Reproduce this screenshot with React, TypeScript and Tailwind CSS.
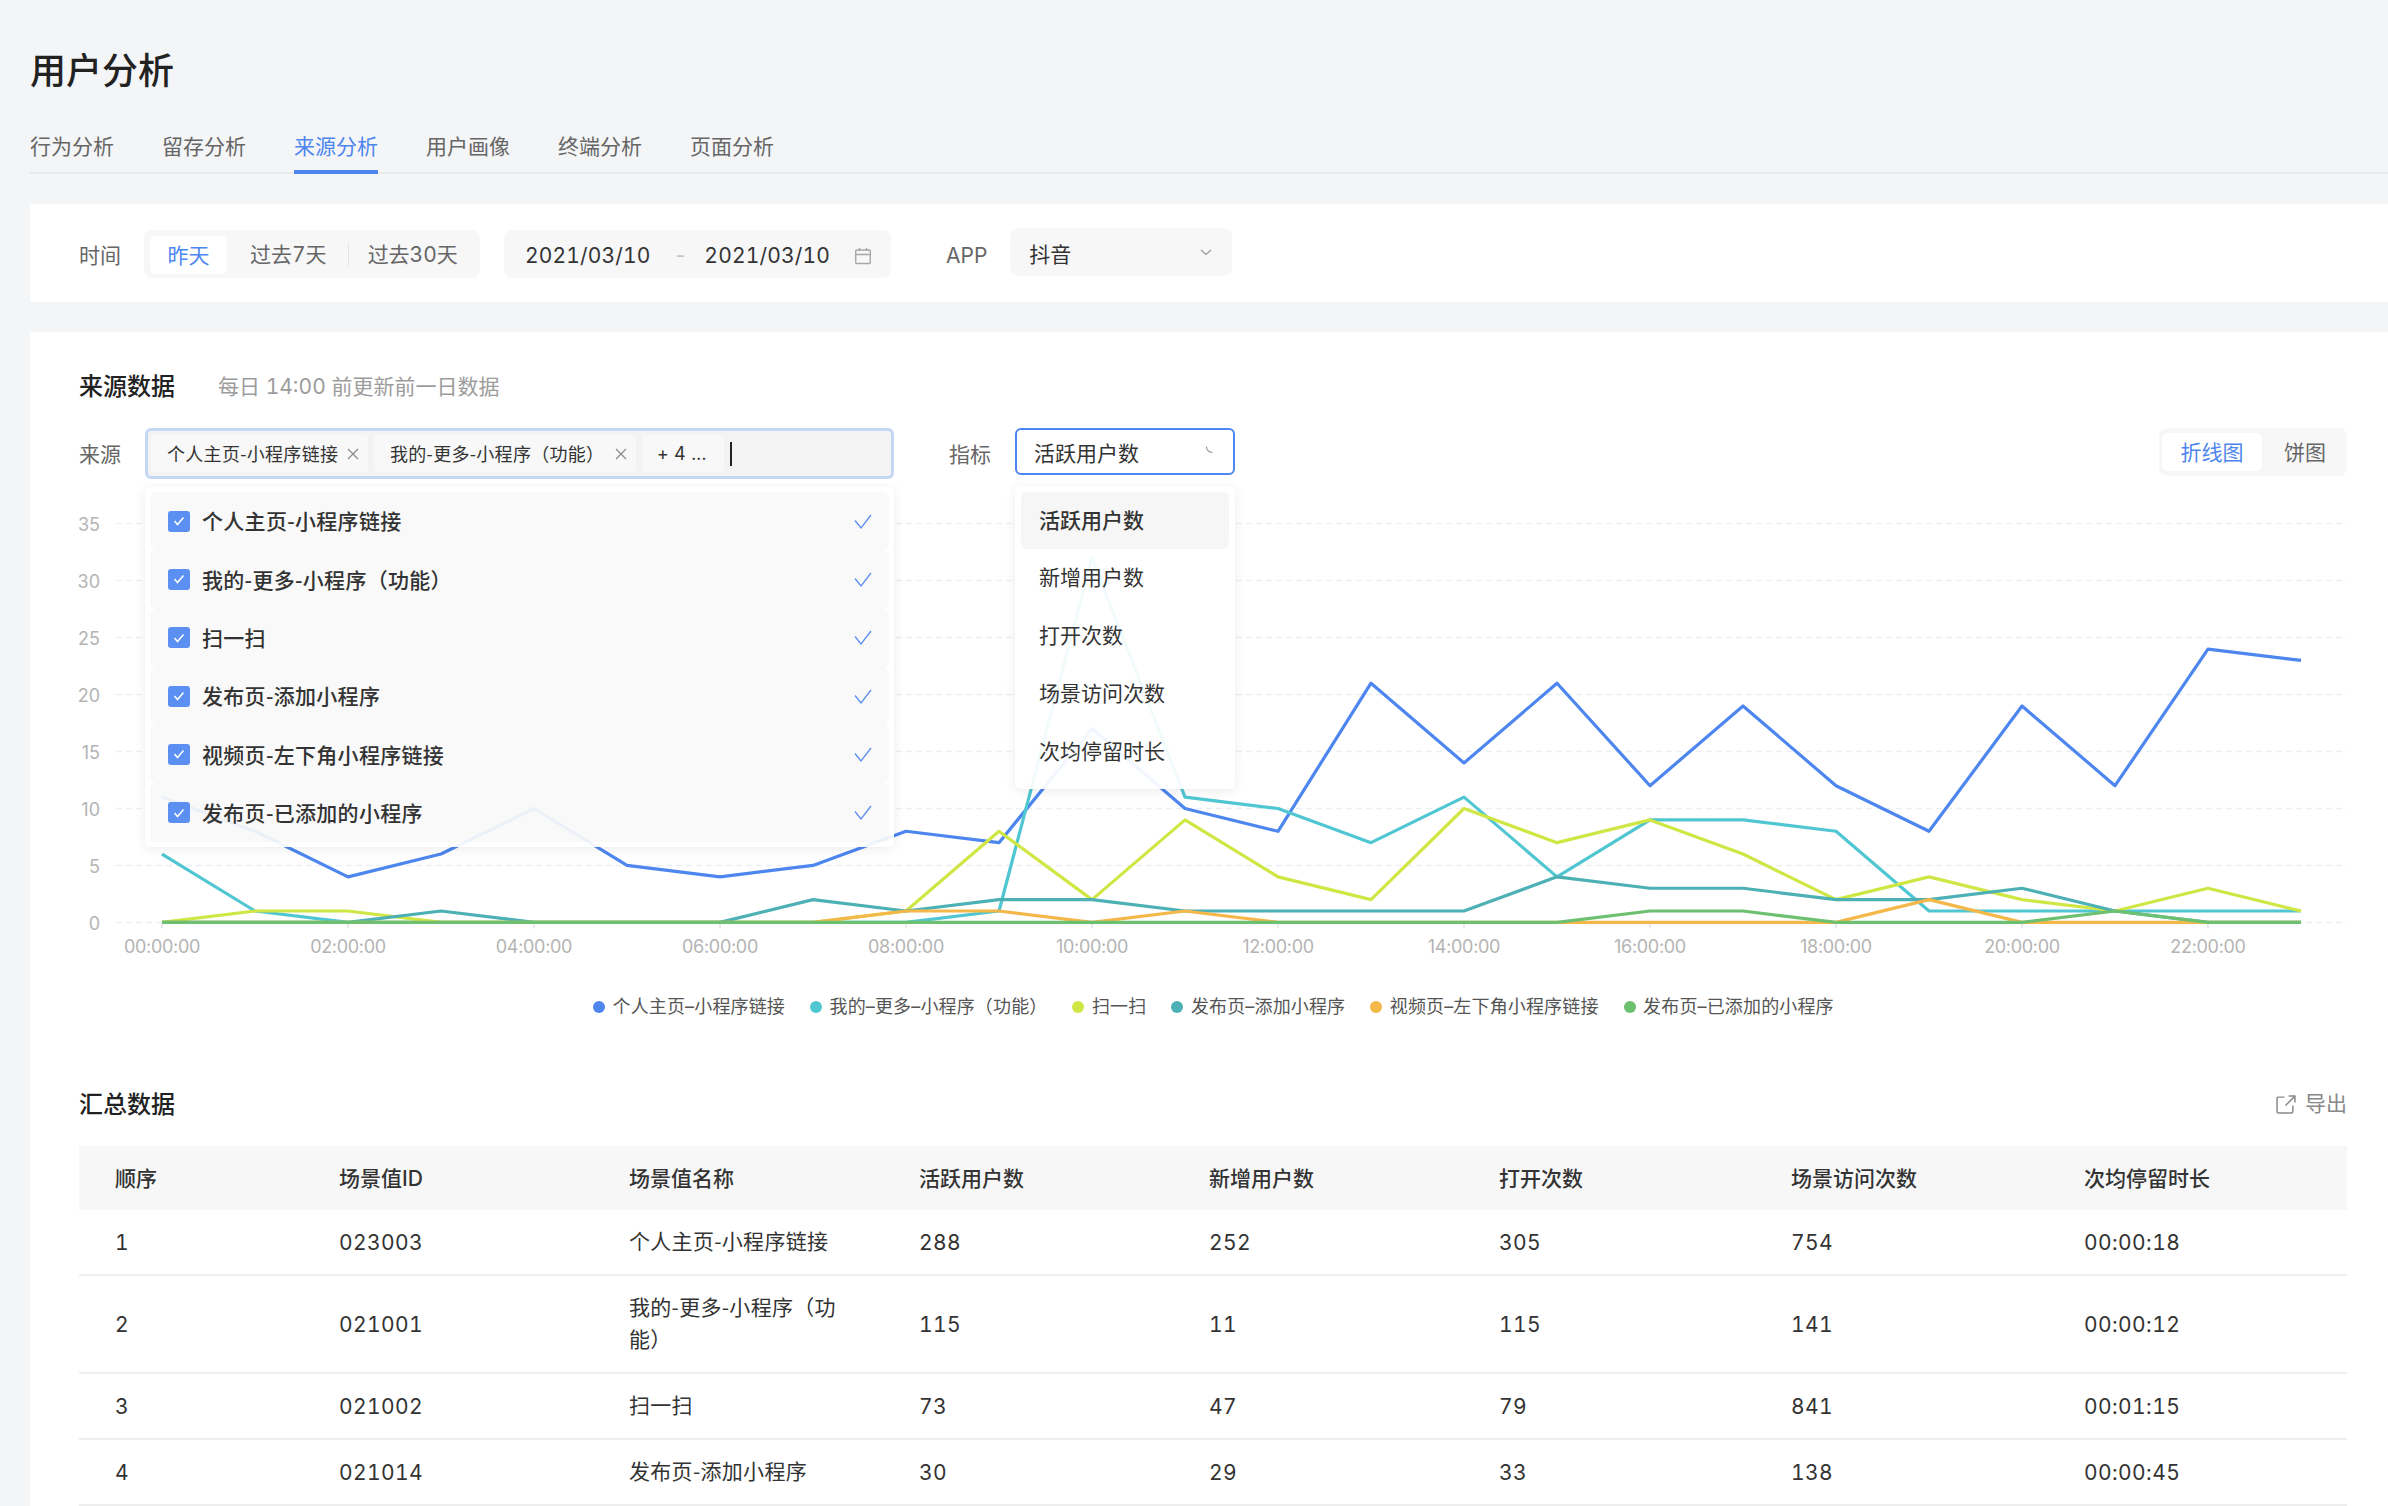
import React from "react";

const series: { color: string; values: number[] }[] = [
  { color: "#4d86ef", values: [11, 8, 4, 6, 10, 5, 4, 5, 8, 7, 17, 10, 8, 21, 14, 21, 12, 19, 12, 8, 19, 12, 24, 23] },
  { color: "#4fc6d1", values: [6, 1, 0, 0, 0, 0, 0, 0, 0, 1, 32, 11, 10, 7, 11, 4, 9, 9, 8, 1, 1, 1, 1, 1] },
  { color: "#cfe644", values: [0, 1, 1, 0, 0, 0, 0, 0, 1, 8, 2, 9, 4, 2, 10, 7, 9, 6, 2, 4, 2, 1, 3, 1] },
  { color: "#4cb0b5", values: [0, 0, 0, 1, 0, 0, 0, 2, 1, 2, 2, 1, 1, 1, 1, 4, 3, 3, 2, 2, 3, 1, 0, 0] },
  { color: "#f4b74a", values: [0, 0, 0, 0, 0, 0, 0, 0, 1, 1, 0, 1, 0, 0, 0, 0, 0, 0, 0, 2, 0, 0, 0, 0] },
  { color: "#6cc070", values: [0, 0, 0, 0, 0, 0, 0, 0, 0, 0, 0, 0, 0, 0, 0, 0, 1, 1, 0, 0, 0, 1, 0, 0] },
];

const X0 = 93;
const XS = 93;
const Y0 = 432.4;
const YS = 11.39;

const sources = [
  "个人主页-小程序链接",
  "我的-更多-小程序（功能）",
  "扫一扫",
  "发布页-添加小程序",
  "视频页-左下角小程序链接",
  "发布页-已添加的小程序",
];
const metrics = ["活跃用户数", "新增用户数", "打开次数", "场景访问次数", "次均停留时长"];
const legend = [
  { color: "bg-[#4d86ef]", label: "个人主页–小程序链接" },
  { color: "bg-[#4fc6d1]", label: "我的–更多–小程序（功能）" },
  { color: "bg-[#cfe644]", label: "扫一扫" },
  { color: "bg-[#4cb0b5]", label: "发布页–添加小程序" },
  { color: "bg-[#f4b74a]", label: "视频页–左下角小程序链接" },
  { color: "bg-[#6cc070]", label: "发布页–已添加的小程序" },
];
const headers = ["顺序", "场景值ID", "场景值名称", "活跃用户数", "新增用户数", "打开次数", "场景访问次数", "次均停留时长"];
const rows = [
  ["1", "023003", "个人主页-小程序链接", "288", "252", "305", "754", "00:00:18"],
  ["2", "021001", "我的-更多-小程序（功能）", "115", "11", "115", "141", "00:00:12"],
  ["3", "021002", "扫一扫", "73", "47", "79", "841", "00:01:15"],
  ["4", "021014", "发布页-添加小程序", "30", "29", "33", "138", "00:00:45"],
];
const tabs = ["行为分析", "留存分析", "来源分析", "用户画像", "终端分析", "页面分析"];

function Cross() {
  return (
    <svg width="12" height="12" viewBox="0 0 12 12" fill="none" stroke="#8a8a8a" strokeWidth="1.2">
      <path d="M1 1l10 10M11 1L1 11" />
    </svg>
  );
}

function Chart() {
  return (
    <svg width="2278" height="470" viewBox="0 0 2278 470" className="-ml-[10px] mt-[11px] block [font-variant-numeric:normal]">
      {[0, 1, 2, 3, 4, 5, 6, 7].map((k) => (
        <g key={k}>
          <line x1="47" x2="2278" y1={Y0 - 57 * k} y2={Y0 - 57 * k} stroke="#eceef1" strokeWidth="1.5" strokeDasharray="6 4" />
          <text x="31" y={Y0 - 57 * k + 7.5} textAnchor="end" fontSize="18" fill="#b4b4b4">
            {k * 5}
          </text>
        </g>
      ))}
      {Array.from({ length: 12 }, (_, i) => i * 2).map((h) => (
        <g key={h}>
          <line x1={X0 + XS * h} x2={X0 + XS * h} y1={Y0} y2={Y0 + 6} stroke="#e3e3e3" strokeWidth="1.5" />
          <text x={X0 + XS * h} y="463" textAnchor="middle" fontSize="18" letterSpacing="-0.3" fill="#b4b4b4">
            {`${String(h).padStart(2, "0")}:00:00`}
          </text>
        </g>
      ))}
      {series.map((s) => (
        <polyline
          key={s.color}
          fill="none"
          stroke={s.color}
          strokeWidth="3.2"
          strokeLinejoin="round"
          points={s.values.map((v, i) => `${X0 + XS * i},${Y0 - YS * v}`).join(" ")}
        />
      ))}
    </svg>
  );
}

export default function App() {
  return (
    <div className="h-[1506px] overflow-hidden bg-[#f4f5f7] pl-[30px] text-[21px] text-[#333] [font-variant-numeric:tabular-nums] font-['Inter','Noto_Sans_CJK_SC',sans-serif]">
      <h1 className="pt-[46px] text-[36px] leading-[50px] font-medium text-[#222]">用户分析</h1>
      <div className="mt-[35px] flex gap-[48px] border-b-[2px] border-[#e8e9eb]">
        {tabs.map((t, i) => (
          <div
            key={t}
            className={
              i === 2
                ? "-mb-[2px] h-[43px] border-b-[4px] border-[#4d86ef] leading-[31px] text-[#4d86ef]"
                : "h-[41px] leading-[31px] text-[#666]"
            }
          >
            {t}
          </div>
        ))}
      </div>

      <div className="mt-[30px] flex h-[98px] items-center bg-white pl-[49px] pt-[2px]">
        <span className="pt-[3px] text-[#666]">时间</span>
        <div className="ml-[23px] flex h-[48px] w-[336px] items-center rounded-lg bg-[#f7f7f8] pl-[6px] pt-[2px]">
          <div className="flex h-[38px] w-[77px] items-center justify-center rounded-md bg-white pt-[2px] text-[#4d86ef]">昨天</div>
          <div className="pl-[23px] pr-[21px] text-[#666]">过去7天</div>
          <div className="h-[24px] w-[1px] bg-[#e6e6e6]"></div>
          <div className="pl-[19px] text-[#666]">过去30天</div>
        </div>
        <div className="ml-[24px] flex h-[48px] w-[387px] items-center rounded-lg bg-[#f7f7f8] pl-[21px] pt-[3px] tracking-[0.15px] text-[#333]">
          <span>2021/03/10</span>
          <span className="ml-[23px] text-[#c4c4c4]">-</span>
          <span className="ml-[17px]">2021/03/10</span>
          <svg className="ml-[24px]" width="18" height="18" viewBox="0 0 18 18" fill="none" stroke="#a8a8a8" strokeWidth="1.4">
            <rect x="1.7" y="3" width="14.6" height="13.5" rx="1" />
            <path d="M1.7 7.5h14.6M5.5 1v3M12.5 1v3" />
          </svg>
        </div>
        <span className="ml-[55px] pt-[3px] text-[#666]">APP</span>
        <div className="relative ml-[23px] mb-[4px] flex h-[48px] w-[222px] items-center rounded-lg bg-[#f7f7f8] pl-[19px] pt-[5px]">
          <span>抖音</span>
          <svg className="absolute right-[20px] top-[21px]" width="12" height="7" viewBox="0 0 12 7" fill="none" stroke="#999" strokeWidth="1.2">
            <path d="M1 1l5 4.5L11 1" />
          </svg>
        </div>
      </div>

      <div className="mt-[30px] h-[1174px] bg-white pl-[49px] pr-[41px]">
        <div className="flex items-center pt-[38px] leading-[34px]">
          <span className="text-[24px] font-medium text-[#222]">来源数据</span>
          <span className="ml-[43px] text-[#9c9c9c]">每日 14:00 前更新前一日数据</span>
        </div>

        <div className="mt-[24px] flex h-[51px] items-start">
          <span className="leading-[54px] text-[#666]">来源</span>
          <div className="relative z-10 ml-[24px] w-[749px]">
            <div className="flex h-[51px] items-center gap-[6px] rounded-md border-[3px] border-[#c6d7f6] bg-[#f3f3f4] pl-[3px] text-[18px] tracking-[0.3px] font-['Noto_Sans_CJK_SC',sans-serif]">
              <div className="flex h-[37px] w-[217px] items-center justify-between rounded bg-[#f8f8f8] pl-[16px] pr-[9px] whitespace-nowrap">
                <span>个人主页-小程序链接</span>
                <Cross />
              </div>
              <div className="flex h-[37px] w-[262px] items-center justify-between rounded bg-[#f8f8f8] pl-[16px] pr-[9px] whitespace-nowrap">
                <span>我的-更多-小程序（功能）</span>
                <Cross />
              </div>
              <div className="flex h-[37px] w-[82px] items-center rounded bg-[#f8f8f8] pl-[15px] whitespace-nowrap font-['Inter',sans-serif]">+ 4 ...</div>
              <div className="h-[24px] w-[2px] bg-[#222]"></div>
            </div>
            <div className="absolute left-0 top-[59px] h-[360px] w-full rounded-md bg-white/[0.93] p-[5px] shadow-[0_2px_12px_rgba(0,0,0,0.08)]">
              {sources.map((s) => (
                <div key={s} className="flex h-[58.3px] items-center rounded-md bg-black/[0.025] pl-[18px] pr-[17px] font-medium tracking-[0.3px] font-['Noto_Sans_CJK_SC',sans-serif]">
                  <div className="flex h-[21px] w-[22px] items-center justify-center rounded-[3px] bg-[#5b8ff2]">
                    <svg width="12" height="10" viewBox="0 0 12 10" fill="none" stroke="#fff" strokeWidth="1.5">
                      <path d="M1.5 5l3 3.5L10.5 1.5" />
                    </svg>
                  </div>
                  <span className="ml-[12px]">{s}</span>
                  <svg className="ml-auto" width="18" height="15" viewBox="0 0 18 15" fill="none" stroke="#5d90ee" strokeWidth="1.3">
                    <path d="M1 6.5l6 7.5L17 1" />
                  </svg>
                </div>
              ))}
            </div>
          </div>
          <span className="ml-[55px] leading-[54px] text-[#666]">指标</span>
          <div className="relative z-10 ml-[24px] w-[220px]">
            <div className="relative flex h-[47px] items-center rounded-md border-[2px] border-[#4d86ef] bg-white pl-[17px] pt-[4px]">
              活跃用户数
              <svg className="absolute right-[18px] top-[15px]" width="10" height="10" viewBox="0 0 10 10" fill="none" stroke="#999" strokeWidth="1.2">
                <path d="M1.5 1.5c0 3 2 5.500 6 6" />
              </svg>
            </div>
            <div className="absolute left-0 top-[58px] h-[303px] w-full rounded-md bg-white/[0.93] p-[6px] shadow-[0_2px_12px_rgba(0,0,0,0.08)]">
              {metrics.map((m, i) => (
                <div
                  key={m}
                  className={
                    i === 0
                      ? "flex h-[57px] items-center rounded-md bg-black/[0.035] pl-[18px] font-medium"
                      : "flex h-[58px] items-center pl-[18px]"
                  }
                >
                  {m}
                </div>
              ))}
            </div>
          </div>
          <div className="ml-auto flex h-[48px] w-[188px] items-center rounded-lg bg-[#f7f7f8] pl-[3px]">
            <div className="flex h-[38px] w-[100px] items-center justify-center rounded-md bg-white pt-[2px] text-[#4d86ef]">折线图</div>
            <div className="pl-[22px] pt-[2px] text-[#666]">饼图</div>
          </div>
        </div>

        <Chart />

        <div className="mt-[34px] flex gap-[25px] pl-[514px] text-[18px] leading-[26px] tracking-[0.15px] text-[#555]">
          {legend.map((l) => (
            <div key={l.label} className="flex items-center gap-[7.5px] whitespace-nowrap">
              <span className={`h-[12px] w-[12px] rounded-full ${l.color}`}></span>
              <span>{l.label}</span>
            </div>
          ))}
        </div>

        <div className="mt-[67px] flex h-[34px] items-center pt-[2px]">
          <span className="text-[24px] font-medium text-[#222]">汇总数据</span>
          <div className="ml-auto mb-[2px] flex items-center gap-[9px] text-[#888]">
            <svg width="20" height="19" viewBox="0 0 19 18" fill="none" stroke="#888" strokeWidth="1.4">
              <path d="M8 2H2a1 1 0 0 0-1 1v13a1 1 0 0 0 1 1h13a1 1 0 0 0 1-1v-6M9 10l8.500-8.500M12 1h6v6" />
            </svg>
            <span>导出</span>
          </div>
        </div>

        <table className="mt-[25px] w-[2268px] table-fixed border-collapse">
          <colgroup>
            <col className="w-[224px]" />
            <col className="w-[290px]" />
            <col className="w-[290px]" />
            <col className="w-[290px]" />
            <col className="w-[290px]" />
            <col className="w-[292px]" />
            <col className="w-[293px]" />
            <col />
          </colgroup>
          <thead>
            <tr className="h-[64px] bg-[#f7f7f8]">
              {headers.map((h) => (
                <th key={h} className="pl-[36px] pt-[1px] text-left font-medium">
                  {h}
                </th>
              ))}
            </tr>
          </thead>
          <tbody>
            {rows.map((r) => (
              <tr key={r[0]} className="border-b-[2px] border-[#eeeeee]">
                {r.map((c, i) => (
                  <td
                    key={i}
                    className={
                      i === 2
                        ? "pb-[18px] pl-[36px] pr-[36px] pt-[14px] leading-[32px] tracking-[0.3px] font-['Noto_Sans_CJK_SC',sans-serif]"
                        : "pb-[15px] pl-[36px] pt-[17px] leading-[32px] tracking-[0.4px]"
                    }
                  >
                    {c}
                  </td>
                ))}
              </tr>
            ))}
          </tbody>
        </table>
      </div>
    </div>
  );
}
